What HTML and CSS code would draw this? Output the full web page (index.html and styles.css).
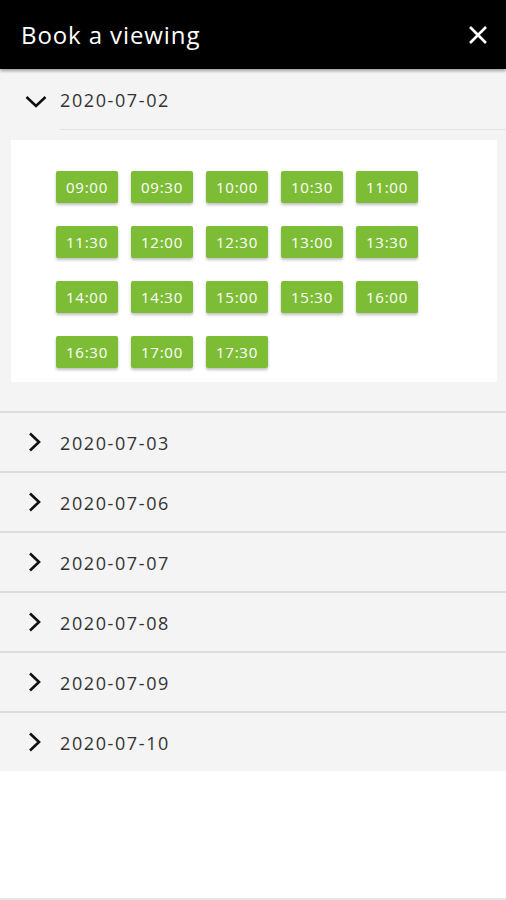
FILE: index.html
```html
<!DOCTYPE html>
<html lang="en">
<head>
    <meta charset="UTF-8">
    <meta name="viewport" content="width=device-width, initial-scale=1.0">
    <title>Book a viewing</title>
    <link rel="stylesheet" href="styles.css">
</head>
<body>
    <div class="page">
        <header class="topbar">
            <h1>Book a viewing</h1>
            <button class="close" aria-label="Close">
                <svg width="20" height="20" viewBox="0 0 20 20"><path d="M2 2L18 18M18 2L2 18" stroke="#fff" stroke-width="2.6" fill="none"/></svg>
            </button>
        </header>

        <main class="days">
            <section class="day open">
                <div class="day-head">
                    <svg class="chev-down" width="22" height="14" viewBox="0 0 22 14"><path d="M1.5 2L11 11L20.5 2" stroke="#111" stroke-width="2.6" fill="none"/></svg>
                    <span class="date">2020-07-02</span>
                </div>
                <div class="day-body">
                    <div class="slots">
                        <button class="slot">09:00</button>
                        <button class="slot">09:30</button>
                        <button class="slot">10:00</button>
                        <button class="slot">10:30</button>
                        <button class="slot">11:00</button>
                        <button class="slot">11:30</button>
                        <button class="slot">12:00</button>
                        <button class="slot">12:30</button>
                        <button class="slot">13:00</button>
                        <button class="slot">13:30</button>
                        <button class="slot">14:00</button>
                        <button class="slot">14:30</button>
                        <button class="slot">15:00</button>
                        <button class="slot">15:30</button>
                        <button class="slot">16:00</button>
                        <button class="slot">16:30</button>
                        <button class="slot">17:00</button>
                        <button class="slot">17:30</button>
                    </div>
                </div>
            </section>

            <section class="day">
                <div class="day-head">
                    <svg class="chev" width="16" height="20" viewBox="0 0 16 20"><path d="M2 1.5L11 10L2 18.5" stroke="#111" stroke-width="2.6" fill="none"/></svg>
                    <span class="date">2020-07-03</span>
                </div>
            </section>
            <section class="day">
                <div class="day-head">
                    <svg class="chev" width="16" height="20" viewBox="0 0 16 20"><path d="M2 1.5L11 10L2 18.5" stroke="#111" stroke-width="2.6" fill="none"/></svg>
                    <span class="date">2020-07-06</span>
                </div>
            </section>
            <section class="day">
                <div class="day-head">
                    <svg class="chev" width="16" height="20" viewBox="0 0 16 20"><path d="M2 1.5L11 10L2 18.5" stroke="#111" stroke-width="2.6" fill="none"/></svg>
                    <span class="date">2020-07-07</span>
                </div>
            </section>
            <section class="day">
                <div class="day-head">
                    <svg class="chev" width="16" height="20" viewBox="0 0 16 20"><path d="M2 1.5L11 10L2 18.5" stroke="#111" stroke-width="2.6" fill="none"/></svg>
                    <span class="date">2020-07-08</span>
                </div>
            </section>
            <section class="day">
                <div class="day-head">
                    <svg class="chev" width="16" height="20" viewBox="0 0 16 20"><path d="M2 1.5L11 10L2 18.5" stroke="#111" stroke-width="2.6" fill="none"/></svg>
                    <span class="date">2020-07-09</span>
                </div>
            </section>
            <section class="day">
                <div class="day-head">
                    <svg class="chev" width="16" height="20" viewBox="0 0 16 20"><path d="M2 1.5L11 10L2 18.5" stroke="#111" stroke-width="2.6" fill="none"/></svg>
                    <span class="date">2020-07-10</span>
                </div>
            </section>
        </main>
    </div>
</body>
</html>
```

FILE: styles.css
```css
body {
    margin: 0;
    font-family: "Open Sans", Arial, sans-serif;
    background: #fff;
}

.page {
    min-height: 100vh;
    display: flex;
    flex-direction: column;
    box-sizing: border-box;
    border-bottom: 2px solid #e4e4e4;
}

.topbar {
    height: 69px;
    background: #000;
    display: flex;
    align-items: center;
    justify-content: space-between;
    padding: 0 15px 0 21px;
    box-shadow: 0 2px 3px rgba(0, 0, 0, 0.35);
    position: relative;
    z-index: 2;
}

.topbar h1 {
    margin: 0;
    color: #fff;
    font-size: 24px;
    font-weight: 400;
    letter-spacing: 0.9px;
}

.close {
    background: none;
    border: none;
    padding: 0;
    width: 26px;
    height: 26px;
    display: flex;
    align-items: center;
    justify-content: center;
    cursor: pointer;
}

.days {
    flex: 1;
}

.day {
    background: #f4f4f4;
    border-top: 2px solid #dcdcdc;
}

.day.open {
    border-top: none;
}

.day-head {
    height: 58px;
    display: flex;
    align-items: center;
}

.day.open .day-head {
    height: 60px;
    margin-left: 60px;
    border-bottom: 1px solid #e2e2e2;
    position: relative;
}

.chev {
    display: block;
    flex-shrink: 0;
    margin: 0 16px 0 28px;
}

.chev-down {
    position: absolute;
    left: -35px;
    top: 26px;
}

.date {
    font-size: 18px;
    color: #333;
    letter-spacing: 1.6px;
    padding-top: 2px;
}

.day-body {
    padding: 10px 9px 29px 11px;
}

.slots {
    background: #fff;
    height: 242px;
    box-sizing: border-box;
    padding: 31px 0 0 45px;
    display: grid;
    grid-template-columns: repeat(5, 62px);
    grid-auto-rows: 32px;
    column-gap: 13px;
    row-gap: 23px;
    align-content: start;
}

.slot {
    background: #7dbd35;
    color: #fff;
    border: none;
    border-radius: 2px;
    font-family: inherit;
    font-size: 15px;
    letter-spacing: 0.8px;
    padding: 0;
    box-shadow: 0 2px 3px rgba(0, 0, 0, 0.25);
    cursor: pointer;
}
```
